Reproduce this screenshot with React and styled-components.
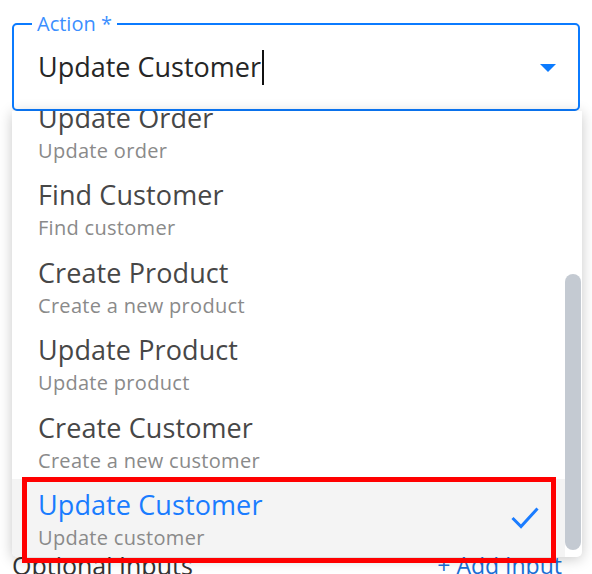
import React, { useEffect, useRef, useState } from 'react';
import styled, { createGlobalStyle } from 'styled-components';

const GlobalStyle = createGlobalStyle`
  body {
    margin: 0;
    background: #ffffff;
    font-family: "Open Sans", "Noto Sans", sans-serif;
  }
`;

const Page = styled.div`
  position: relative;
  width: 592px;
  height: 574px;
  overflow: hidden;
  padding: 14px 12px 0;
  box-sizing: border-box;
`;

const Field = styled.fieldset`
  margin: 0;
  padding: 15px 24px 0;
  height: 97px;
  box-sizing: border-box;
  border: 2px solid #0b7bff;
  border-radius: 5px;
  display: flex;
  align-items: flex-start;
`;

const Legend = styled.legend`
  margin-left: -6px;
  padding: 0 5px;
  font-size: 20px;
  line-height: 20px;
  color: #3b8fff;
`;

const Value = styled.div`
  display: flex;
  align-items: center;
  flex: 1;
  font-size: 27px;
  line-height: 36px;
  color: #262626;
`;

const Caret = styled.span`
  width: 2px;
  height: 35px;
  margin-left: 1px;
  background: #111;
`;

const Arrow = styled.span`
  width: 0;
  height: 0;
  margin-top: 15px;
  margin-right: -2px;
  border-left: 8.5px solid transparent;
  border-right: 8.5px solid transparent;
  border-top: 8.5px solid #0b7bff;
`;

const MenuWrap = styled.div`
  position: absolute;
  top: 111px;
  left: 12px;
  width: 570px;
  height: 446px;
  background: #ffffff;
  border-radius: 0 0 5px 5px;
  box-shadow: 0 2px 14px rgba(0, 0, 0, 0.22);
  overflow: hidden;
  z-index: 2;
`;

const Scroller = styled.ul`
  height: 100%;
  margin: 0 17px 0 0;
  padding: 0;
  list-style: none;
  overflow-y: scroll;
  scrollbar-width: none;

  &::-webkit-scrollbar {
    display: none;
  }
`;

const Thumb = styled.div`
  position: absolute;
  right: 1px;
  width: 16px;
  border-radius: 8px;
  background: #c4cad2;
`;

const Item = styled.li`
  height: 77.5px;
  box-sizing: border-box;
  padding: 9px 26px 0;
  display: flex;
  align-items: flex-start;
  background: ${(p) => (p.$selected ? '#f4f4f4' : 'transparent')};
`;

const Texts = styled.div`
  flex: 1;
  display: flex;
  flex-direction: column;
`;

const Title = styled.span`
  font-size: 27px;
  line-height: 34px;
  color: ${(p) => (p.$selected ? '#1a7cff' : '#474747')};
  letter-spacing: 0.1px;
`;

const Sub = styled.span`
  margin-top: 3px;
  font-size: 20px;
  line-height: 26px;
  color: #8a8a8a;
  letter-spacing: 0.3px;
`;

const CheckSvg = styled.svg`
  align-self: center;
  margin-top: -9px;
  width: 28px;
  height: 22px;
  flex: none;
`;

const OptionalRow = styled.div`
  display: flex;
  justify-content: space-between;
  align-items: center;
  margin-top: 437px;
  font-size: 25px;
  color: #333333;
`;

const AddLink = styled.span`
  color: #1a6fd6;
  font-size: 23px;
  margin-right: 18px;
`;

const Highlight = styled.div`
  position: absolute;
  left: 22px;
  top: 477px;
  width: 534px;
  height: 86px;
  box-sizing: border-box;
  border: 5px solid #ff0000;
  z-index: 3;
  pointer-events: none;
`;

const actions = [
  { title: 'Create Order', sub: 'Create a new order' },
  { title: 'Find Order', sub: 'Find order' },
  { title: 'Find Product', sub: 'Find product' },
  { title: 'Update Order', sub: 'Update order' },
  { title: 'Find Customer', sub: 'Find customer' },
  { title: 'Create Product', sub: 'Create a new product' },
  { title: 'Update Product', sub: 'Update product' },
  { title: 'Create Customer', sub: 'Create a new customer' },
  { title: 'Update Customer', sub: 'Update customer' },
];

const CheckIcon = () => (
  <CheckSvg viewBox="0 0 28 22">
    <polyline
      points="1.5,11 10,19.5 26.5,1.5"
      fill="none"
      stroke="#1a7cff"
      strokeWidth="3"
    />
  </CheckSvg>
);

const App = () => {
  const menuRef = useRef(null);
  const [thumb, setThumb] = useState({ top: 0, height: 0 });
  const selected = 'Update Customer';

  useEffect(() => {
    const el = menuRef.current;
    if (!el) return;
    el.scrollTop = el.scrollHeight;
    // draw the scrollbar ourselves, headless hides the native one
    const margin = 7;
    const track = el.clientHeight - margin * 2;
    const height = (track * el.clientHeight) / el.scrollHeight;
    const max = el.scrollHeight - el.clientHeight;
    const top = margin + (max ? el.scrollTop / max : 0) * (track - height);
    setThumb({ top, height });
  }, []);

  return (
    <>
      <GlobalStyle />
      <Page>
        <Field>
          <Legend>Action *</Legend>
          <Value>
            {selected}
            <Caret />
          </Value>
          <Arrow />
        </Field>
        <MenuWrap>
          <Scroller ref={menuRef}>
            {actions.map((a) => {
              const isSel = a.title === selected;
              return (
                <Item key={a.title} $selected={isSel}>
                  <Texts>
                    <Title $selected={isSel}>{a.title}</Title>
                    <Sub>{a.sub}</Sub>
                  </Texts>
                  {isSel && <CheckIcon />}
                </Item>
              );
            })}
          </Scroller>
          <Thumb style={{ top: thumb.top, height: thumb.height }} />
        </MenuWrap>
        <OptionalRow>
          <span>Optional Inputs</span>
          <AddLink>+ Add Input</AddLink>
        </OptionalRow>
        <Highlight />
      </Page>
    </>
  );
};

export default App;
